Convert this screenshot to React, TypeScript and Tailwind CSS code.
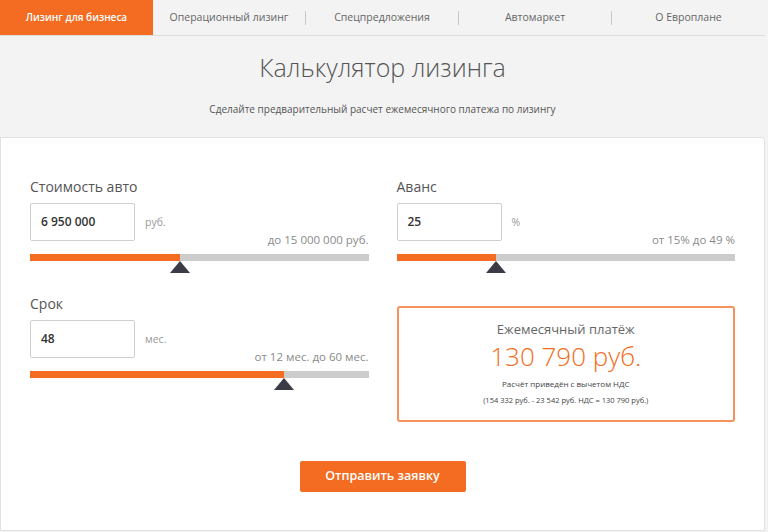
import React from "react";

const ORANGE = "#f36c21";

function Slider({ pct }: { pct: number }) {
  return (
    <div className="relative mt-[6px] h-[19px]">
      <div className="flex h-[7px] w-full bg-[#cccccc]">
        <div className="h-full bg-[#f36c21]" style={{ width: `${pct}%` }} />
      </div>
      <div
        className="absolute top-[7px] h-0 w-0 -translate-x-1/2 border-x-[10px] border-b-[12px] border-x-transparent border-b-[#3b3b45]"
        style={{ left: `${pct}%` }}
      />
    </div>
  );
}

function Field({
  label,
  value,
  unit,
  range,
  pct,
}: {
  label: string;
  value: string;
  unit: string;
  range: string;
  pct: number;
}) {
  return (
    <div className="flex flex-col">
      <div className="text-[14px] leading-[18px] text-[#555]">{label}</div>
      <div className="mt-[7px] flex h-[45px]">
        <div className="flex h-[38px] w-[105px] items-center rounded-[2px] border border-[#cfcfcf] bg-white pl-[10px] text-[12px] font-semibold text-[#333]">
          {value}
        </div>
        <div className="ml-[10px] mt-[12px] text-[10.5px] leading-[14px] text-[#9a9a9a]">{unit}</div>
        <div className="ml-auto self-end text-[11.5px] leading-[16px] text-[#8a8a8a]">{range}</div>
      </div>
      <Slider pct={pct} />
    </div>
  );
}

export default function App() {
  const nav = ["Операционный лизинг", "Спецпредложения", "Автомаркет", "О Европлане"];
  return (
    <div
      className="min-h-[532px] w-[768px] bg-[#f3f3f3]"
      style={{ fontFamily: '"Open Sans", "Noto Sans", sans-serif' }}
    >
      <div className="w-[765px]">
        <nav className="flex h-[36px] border-b border-[#dedede]">
          <div className="flex h-[35px] w-[153px] items-center justify-center bg-[#f36c21] text-[10px] font-semibold text-white">
            Лизинг для бизнеса
          </div>
          {nav.map((n, i) => (
            <div key={n} className="flex h-[35px] w-[153px] items-center">
              <div className="flex-1 text-center text-[10.5px] text-[#666]">{n}</div>
              {i < nav.length - 1 && <div className="h-[14px] w-px bg-[#c8c8c8]" />}
            </div>
          ))}
        </nav>
        <h1 className="mt-[15px] text-center text-[25px] font-light leading-[32px] text-[#555]">
          Калькулятор лизинга
        </h1>
        <p className="mt-[18px] text-center text-[10px] leading-[16px] text-[#555]">
          Сделайте предварительный расчет ежемесячного платежа по лизингу
        </p>
        <div className="mt-[20px] rounded-tr-[3px] border border-[#e2e2e2] bg-white px-[29px] pb-[38px] pt-[40px]">
          <div className="grid grid-cols-2 gap-x-[28px]">
            <Field label="Стоимость авто" value="6 950 000" unit="руб." range="до 15 000 000 руб." pct={44.4} />
            <Field label="Аванс" value="25" unit="%" range="от 15% до 49 %" pct={29.3} />
            <div className="mt-[22px]">
              <Field label="Срок" value="48" unit="мес." range="от 12 мес. до 60 мес." pct={75} />
            </div>
            <div className="mt-[33px] flex h-[116px] flex-col items-center rounded-[3px] border-2 border-[#f7915a] pt-[12px]">
              <div className="text-[13px] leading-[18px] text-[#666]">Ежемесячный платёж</div>
              <div className="mt-[2px] text-[26px] font-light leading-[32px]" style={{ color: ORANGE }}>
                130 790 руб.
              </div>
              <div className="mt-[6px] text-[8px] leading-[12px] text-[#444]">Расчёт приведён с вычетом НДС</div>
              <div className="mt-[4px] text-[7.5px] leading-[12px] text-[#444]">
                (154 332 руб. - 23 542 руб. НДС = 130 790 руб.)
              </div>
            </div>
          </div>
          <div className="mt-[39px] flex justify-center">
            <div className="flex h-[31px] w-[166px] items-center justify-center rounded-[2px] bg-[#f36c21] text-[12.5px] font-semibold text-white">
              Отправить заявку
            </div>
          </div>
        </div>
      </div>
    </div>
  );
}
